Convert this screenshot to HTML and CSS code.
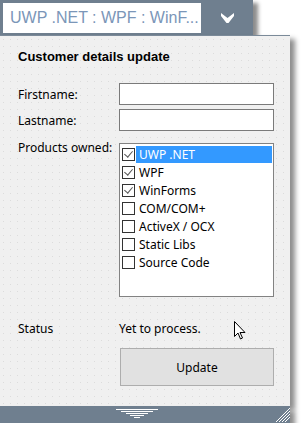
FILE: index.html
```html
<!DOCTYPE html>
<html lang="en">
<head>
    <meta charset="UTF-8">
    <title>Customer details update</title>
    <link rel="stylesheet" href="styles.css">
</head>
<body>
    <div class="widget">
        <div class="combo">
            <div class="combo-text">UWP .NET : WPF : WinF...</div>
            <div class="combo-btn">
                <svg width="13" height="11" viewBox="0 0 13 11"><path d="M0 1 L6.5 6 L13 1 L13 4 L7.5 11 L5.5 11 L0 4 Z" fill="#fff"/></svg>
            </div>
        </div>
        <div class="panel">
            <h1>Customer details update</h1>
            <div class="form">
                <label>Firstname:</label>
                <input type="text" class="field">
                <label>Lastname:</label>
                <input type="text" class="field">
                <label class="top">Products owned:</label>
                <div class="listbox">
                    <div class="item"><span class="box on"></span><span class="name selected">UWP .NET</span></div>
                    <div class="item"><span class="box on"></span><span class="name">WPF</span></div>
                    <div class="item"><span class="box on"></span><span class="name">WinForms</span></div>
                    <div class="item"><span class="box"></span><span class="name">COM/COM+</span></div>
                    <div class="item"><span class="box"></span><span class="name">ActiveX / OCX</span></div>
                    <div class="item"><span class="box"></span><span class="name">Static Libs</span></div>
                    <div class="item"><span class="box"></span><span class="name">Source Code</span></div>
                </div>
                <label class="status">Status</label>
                <div class="status">Yet to process.</div>
                <span></span>
                <button class="update">Update</button>
            </div>
            <svg class="cursor" width="13" height="20" viewBox="0 0 13 20">
                <path d="M0.5 0.5 L0.5 15.5 L4 12 L6.5 18 L8.5 17 L6 11.5 L11 11.5 Z" fill="#fff" stroke="#000" stroke-width="1"/>
            </svg>
        </div>
        <div class="footer">
            <svg width="44" height="12" viewBox="0 0 44 12">
                <g stroke="#fff" stroke-width="1">
                    <line x1="0" y1="0.5" x2="42" y2="0.5"/>
                    <line x1="5" y1="2.5" x2="37" y2="2.5"/>
                    <line x1="10" y1="4.5" x2="32" y2="4.5"/>
                    <line x1="14" y1="6.5" x2="28" y2="6.5"/>
                    <line x1="18" y1="8.5" x2="24" y2="8.5"/>
                </g>
            </svg>
            <svg class="grip" width="15" height="15" viewBox="0 0 15 15">
                <g stroke="#fff" stroke-width="1">
                    <line x1="1" y1="15" x2="15" y2="1"/>
                    <line x1="4" y1="15" x2="15" y2="4"/>
                    <line x1="7" y1="15" x2="15" y2="7"/>
                    <line x1="10" y1="15" x2="15" y2="10"/>
                </g>
            </svg>
        </div>
    </div>
</body>
</html>
```

FILE: styles.css
```css
body {
    margin: 0;
    background: #fff;
    font-family: 'Noto Sans', 'Liberation Sans', sans-serif;
    color: #000;
}
.widget { width: 290px; position: relative; }

.combo {
    display: flex;
    width: 253px;
    height: 35px;
    background: #6f7f8f;
    box-sizing: border-box;
    padding: 3px 0 2px 3px;
    box-shadow: 5px 3px 4px rgba(0, 0, 0, 0.45);
}
.combo-text {
    width: 198px;
    background: #fff;
    color: #7b96b8;
    font-family: 'Liberation Sans', Arial, sans-serif;
    font-size: 16px;
    line-height: 30px;
    padding-left: 7px;
    box-sizing: border-box;
    white-space: nowrap;
    overflow: hidden;
}
.combo-btn {
    flex: 1;
    display: flex;
    align-items: center;
    justify-content: center;
    padding-bottom: 2px;
}

.panel {
    position: relative;
    background-color: #f0f0f0;
    background-image: radial-gradient(circle, #dcdcdc 0.7px, transparent 1px);
    background-size: 7px 7px;
    border-top: 1px solid #7b8a99;
    padding: 13px 16px 21px 18px;
    box-shadow: 5px 4px 5px rgba(0, 0, 0, 0.45);
    height: 371px;
    box-sizing: border-box;
}
h1 {
    margin: 0;
    font-family: 'Liberation Sans', Arial, sans-serif;
    font-size: 13px;
    line-height: 16px;
    font-weight: bold;
}
.form {
    display: grid;
    grid-template-columns: 101px 155px;
    margin-top: 18px;
    row-gap: 4px;
    font-size: 12px;
}
.form label { display: flex; align-items: center; }
.form label.top { align-items: flex-start; margin-top: 4px; }
.field {
    height: 22px;
    box-sizing: border-box;
    border: 1px solid #7a7a7a;
    background: #fff;
    margin: 0;
}
.listbox {
    margin-top: 8px;
    height: 154px;
    box-sizing: border-box;
    border: 1px solid #828282;
    background: #fff;
    padding: 1px 1px 0 2px;
}
.item { display: flex; align-items: center; height: 18px; }
.box {
    width: 13px;
    height: 13px;
    box-sizing: border-box;
    border: 1px solid #333;
    background: #fff;
    margin-right: 1px;
    position: relative;
}
.box.on::after {
    content: "";
    position: absolute;
    left: 3px;
    top: 0px;
    width: 4px;
    height: 7px;
    border: solid #555;
    border-width: 0 1.5px 1.5px 0;
    transform: rotate(40deg);
}
.name {
    flex: 1;
    height: 17px;
    line-height: 17px;
    padding-left: 3px;
    font-size: 12px;
}
.name.selected { background: #3399ff; color: #fff; }
.status {
    margin-top: 19px;
    line-height: 18px;
    font-size: 12px;
}
label.status { margin-top: 19px; }
.update {
    margin: 6px 0 0 1px;
    height: 38px;
    width: 154px;
    background: #e1e1e1;
    border: 1px solid #adadad;
    font-family: 'Noto Sans', 'Liberation Sans', sans-serif;
    font-size: 12px;
    color: #000;
}
.cursor { position: absolute; left: 234px; top: 285px; }

.footer {
    height: 17px;
    background: #6f7f8f;
    display: flex;
    justify-content: center;
    align-items: center;
    position: relative;
    box-shadow: 5px 5px 5px rgba(0, 0, 0, 0.45);
    padding-right: 14px;
}
.grip { position: absolute; right: 0; bottom: 1px; }
```
